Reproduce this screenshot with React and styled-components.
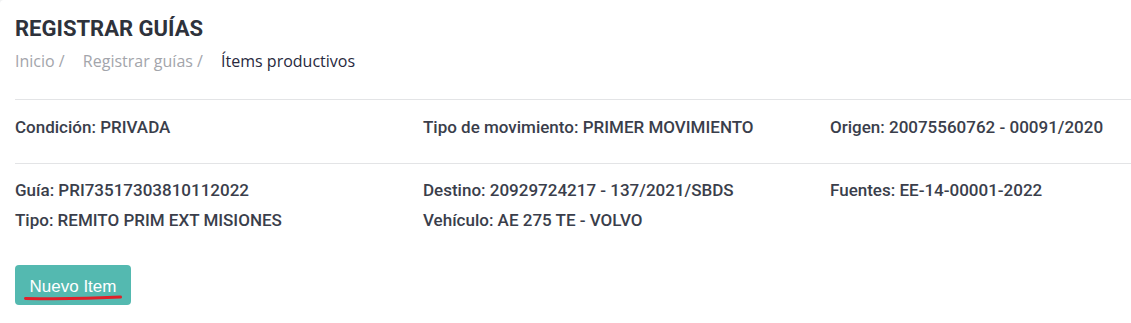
import React from 'react';
import styled, { createGlobalStyle } from 'styled-components';

const GlobalStyle = createGlobalStyle`
  html, body {
    margin: 0;
    padding: 0;
    background: #f1f2f3;
  }
  body {
    font-family: Roboto, "Liberation Sans", sans-serif;
  }
`;

const Card = styled.div`
  background: #fff;
  border-top-left-radius: 4px;
  min-height: 323px;
  padding: 15px 0 0 15px;
  box-sizing: border-box;
`;

const Title = styled.h1`
  margin: 0;
  font-family: Roboto, sans-serif;
  font-size: 22px;
  font-weight: 700;
  line-height: 28px;
  color: #2e323b;
`;

const Crumbs = styled.nav`
  display: flex;
  margin-top: 7px;
  font-family: "Open Sans", sans-serif;
  font-size: 16px;
  line-height: 22px;
`;

const Crumb = styled.span`
  color: ${p => (p.$active ? '#28293d' : '#a3a5ab')};
  margin-right: ${p => (p.$active ? 0 : '14px')};
`;

const Divider = styled.hr`
  border: 0;
  border-top: 1px solid #e3e4e6;
  margin: 0;
`;

const InfoGrid = styled.div`
  display: grid;
  grid-template-columns: 408px 407px 1fr;
  padding: ${p => p.$pad};
`;

const Col = styled.div`
  display: flex;
  flex-direction: column;
  gap: 8px;
`;

const Field = styled.div`
  font-size: 17px;
  font-weight: 500;
  line-height: 22px;
  color: #3a3e4b;
`;

const Spacer = styled.div`
  height: 27px;
`;

const Actions = styled.div`
  padding-top: 34px;
`;

const NewButton = styled.button`
  position: relative;
  width: 116px;
  height: 40px;
  border: none;
  border-radius: 4px;
  background: #54b9b0;
  color: #fff;
  font-family: "Liberation Sans", Arial, sans-serif;
  font-size: 17px;
  padding: 3px 0 0;
  cursor: pointer;
`;

const Mark = styled.svg`
  position: absolute;
  left: 9px;
  top: 30px;
`;

export default function App() {
  return (
    <>
      <GlobalStyle />
      <Card>
        <Title>REGISTRAR GUÍAS</Title>
        <Crumbs>
          <Crumb>Inicio /</Crumb>
          <Crumb>&nbsp;Registrar guías /</Crumb>
          <Crumb $active>&nbsp;Ítems productivos</Crumb>
        </Crumbs>
        <Spacer />
        <Divider />
        <InfoGrid $pad="16px 0 25px">
          <Field>Condición: PRIVADA</Field>
          <Field>Tipo de movimiento: PRIMER MOVIMIENTO</Field>
          <Field>Origen: 20075560762 - 00091/2020</Field>
        </InfoGrid>
        <Divider />
        <InfoGrid $pad="15px 0 0">
          <Col>
            <Field>Guía: PRI73517303810112022</Field>
            <Field>Tipo: REMITO PRIM EXT MISIONES</Field>
          </Col>
          <Col>
            <Field>Destino: 20929724217 - 137/2021/SBDS</Field>
            <Field>Vehículo: AE 275 TE - VOLVO</Field>
          </Col>
          <Col>
            <Field>Fuentes: EE-14-00001-2022</Field>
          </Col>
        </InfoGrid>
        <Actions>
          <NewButton>
            Nuevo Item
            <Mark width="98" height="6" viewBox="0 0 98 6">
              <path d="M1.5 3.5 Q50 4.5 96.5 2" stroke="#e0202a" strokeWidth="3" fill="none" strokeLinecap="round" />
            </Mark>
          </NewButton>
        </Actions>
      </Card>
    </>
  );
}
